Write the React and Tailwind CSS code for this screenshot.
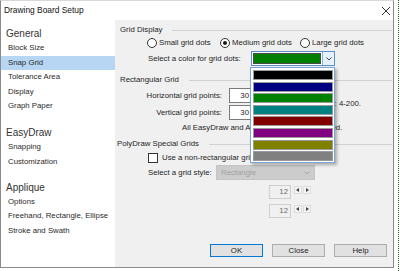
import React from "react";

function Radio({ checked }) {
  return (
    <span className="w-[10px] h-[10px] rounded-full border border-[#333333] bg-white flex items-center justify-center shrink-0">
      {checked && <span className="w-[4px] h-[4px] rounded-full bg-[#1a1a1a]" />}
    </span>
  );
}

function GroupHeader({ label, pl }) {
  return (
    <div className={`h-[12px] flex items-center gap-[10px] ${pl}`}>
      <span className="whitespace-nowrap">{label}</span>
      <div className="flex-1 border-t border-[#d2d2d2] mr-[1px]" />
    </div>
  );
}

function Spin() {
  return (
    <div className="mt-[5px] h-[14px] flex items-start pl-[154px]">
      <div className="w-[22px] h-[14px] border border-[#cfcfcf] bg-[#f0f0f0] text-right pr-[2px] text-[#6d6d6d] leading-[12px]">
        12
      </div>
      <div className="flex ml-[3px] mt-[1px] gap-[1px]">
        <span className="w-[8px] h-[8px] border border-[#dcdcdc] bg-[#f4f4f4] flex items-center justify-center">
          <svg width="4" height="4" viewBox="0 0 4 4"><path d="M3 0 L0 2 L3 4 Z" fill="#444" /></svg>
        </span>
        <span className="w-[8px] h-[8px] border border-[#dcdcdc] bg-[#f4f4f4] flex items-center justify-center">
          <svg width="4" height="4" viewBox="0 0 4 4"><path d="M1 0 L4 2 L1 4 Z" fill="#444" /></svg>
        </span>
      </div>
    </div>
  );
}

export default function App() {
  const colors = ["#000000", "#000080", "#008000", "#008080", "#800000", "#800080", "#808000", "#808080"];
  return (
    <div className="w-[400px] h-[271px] bg-white relative overflow-hidden font-['Liberation_Sans',Arial,sans-serif] text-[7.8px] text-[#1e1e1e] leading-none">
      <div className="absolute right-[1px] top-0 bottom-0 border-l border-dotted border-[#1f5f1f]" />
      <div className="relative w-[394px] h-[268px] flex flex-col border-l border-r border-b border-t border-t-[#d8d8d8] border-[#8a8a8a] bg-white">
        {/* title bar */}
        <div className="h-[19px] flex items-center justify-between pl-[3px] pr-[1px]">
          <span className="text-[8.4px] text-[#111]">Drawing Board Setup</span>
          <svg width="10" height="10" viewBox="0 0 10 10" className="mr-[1px]">
            <path d="M1 1 L9 9 M9 1 L1 9" stroke="#333" strokeWidth="1" />
          </svg>
        </div>
        {/* body */}
        <div className="flex-1 flex">
          {/* sidebar */}
          <div className="w-[114px] bg-white pt-[7px] flex flex-col text-[#2a2a2a]">
            <div className="h-[14px] flex items-center pl-[5px] text-[10px] text-[#333]">General</div>
            <div className="h-[14.5px] flex items-center pl-[7px]">Block Size</div>
            <div className="h-[14.5px] flex items-center pl-[7px] bg-[#b6d6f4]">Snap Grid</div>
            <div className="h-[14.5px] flex items-center pl-[7px]">Tolerance Area</div>
            <div className="h-[14.5px] flex items-center pl-[7px]">Display</div>
            <div className="h-[14.5px] flex items-center pl-[7px]">Graph Paper</div>
            <div className="mt-[12.5px] h-[14px] flex items-center pl-[5px] text-[10px] text-[#333]">EasyDraw</div>
            <div className="h-[14.5px] flex items-center pl-[7px]">Snapping</div>
            <div className="h-[14.5px] flex items-center pl-[7px]">Customization</div>
            <div className="mt-[12px] h-[14px] flex items-center pl-[5px] text-[10px] text-[#333]">Applique</div>
            <div className="h-[14.25px] flex items-center pl-[7px]">Options</div>
            <div className="h-[14.25px] flex items-center pl-[7px]">Freehand, Rectangle, Ellipse</div>
            <div className="h-[14.25px] flex items-center pl-[7px]">Stroke and Swath</div>
          </div>
          {/* content */}
          <div className="flex-1 bg-[#f0f0f0] relative flex flex-col">
            <div className="mt-[4px]">
              <GroupHeader label="Grid Display" pl="pl-[5px]" />
            </div>
            <div className="mt-[1px] h-[12px] flex items-center pl-[32px]">
              <div className="w-[73px] flex items-center gap-[2px]"><Radio /><span>Small grid dots</span></div>
              <div className="w-[80px] flex items-center gap-[2px]"><Radio checked /><span>Medium grid dots</span></div>
              <div className="flex items-center gap-[2px]"><Radio /><span>Large grid dots</span></div>
            </div>
            <div className="mt-[2px] h-[15px] flex items-center pl-[33px]">
              <span className="w-[103px] whitespace-nowrap">Select a color for grid dots:</span>
              <div className="w-[84px] h-[15px] flex border border-[#5a8fc8] bg-white">
                <div className="flex-1 p-[1px]">
                  <div className="w-full h-full bg-[#008000] border border-[#4d4d4d]" />
                </div>
                <div className="w-[12px] bg-[#e5f1fb] border-l border-[#7eb4ea] flex items-center justify-center">
                  <svg width="6" height="4" viewBox="0 0 6 4"><path d="M0.5 0.5 L3 3 L5.5 0.5" stroke="#333" strokeWidth="0.9" fill="none" /></svg>
                </div>
              </div>
            </div>
            <div className="mt-[8px]">
              <GroupHeader label="Rectangular Grid" pl="pl-[5px]" />
            </div>
            <div className="flex">
              <div className="w-[137px] flex flex-col">
                <div className="mt-[2px] h-[15px] flex items-center">
                  <span className="w-[107px] text-right whitespace-nowrap">Horizontal grid points:</span>
                  <div className="ml-[7px] w-[23px] h-[15px] border border-[#7a7a7a] bg-white text-right pr-[2px] flex items-center justify-end">30</div>
                </div>
                <div className="mt-[2px] h-[15px] flex items-center">
                  <span className="w-[107px] text-right whitespace-nowrap">Vertical grid points:</span>
                  <div className="ml-[7px] w-[23px] h-[15px] border border-[#7a7a7a] bg-white text-right pr-[2px] flex items-center justify-end">30</div>
                </div>
              </div>
              <div className="w-[109px] self-center mt-[2px] text-right whitespace-nowrap">Range: 4-200.</div>
            </div>
            <div className="mt-[2px] h-[12px] flex items-center pl-[67px] whitespace-nowrap">
              All EasyDraw and Applique grids are changed.
            </div>
            <div className="mt-[4px]">
              <GroupHeader label="PolyDraw Special Grids" pl="pl-[2px]" />
            </div>
            <div className="mt-[2px] h-[12px] flex items-center pl-[33px]">
              <span className="w-[10px] h-[10px] border border-[#333333] bg-white" />
              <span className="ml-[4px]">Use a non-rectangular grid</span>
            </div>
            <div className="mt-[1px] h-[15px] flex items-center pl-[33px]">
              <span className="w-[68px] whitespace-nowrap">Select a grid style:</span>
              <div className="w-[99px] h-[15px] bg-[#cccccc] border border-[#c4c4c4] flex items-center justify-between pl-[4px] pr-[4px] text-[#a2a2a2]">
                <span>Rectangle</span>
                <svg width="6" height="4" viewBox="0 0 6 4"><path d="M0.5 0.5 L3 3 L5.5 0.5" stroke="#a0a0a0" strokeWidth="0.9" fill="none" /></svg>
              </div>
            </div>
            <Spin />
            <Spin />
            <div className="mt-auto mb-[10px] flex pl-[95px] gap-[9px]">
              <div className="w-[53px] h-[13px] bg-[#e1e1e1] border border-[#0078d7] flex items-center justify-center">OK</div>
              <div className="w-[53px] h-[13px] bg-[#e1e1e1] border border-[#adadad] flex items-center justify-center">Close</div>
              <div className="w-[53px] h-[13px] bg-[#e1e1e1] border border-[#adadad] flex items-center justify-center">Help</div>
            </div>
            {/* dropdown list */}
            <div className="absolute left-[135px] top-[47px] w-[85px] bg-white border border-[#7aa7d6] pl-[2px] pr-[1px] pt-[2px] pb-[1px] flex flex-col gap-[1.6px] shadow-[2px_2px_3px_rgba(0,0,0,0.3)]">
              {colors.map((c) => (
                <div key={c} className="h-[10px] border border-[#9a9a9a]" style={{ backgroundColor: c }} />
              ))}
            </div>
          </div>
        </div>
      </div>
    </div>
  );
}
